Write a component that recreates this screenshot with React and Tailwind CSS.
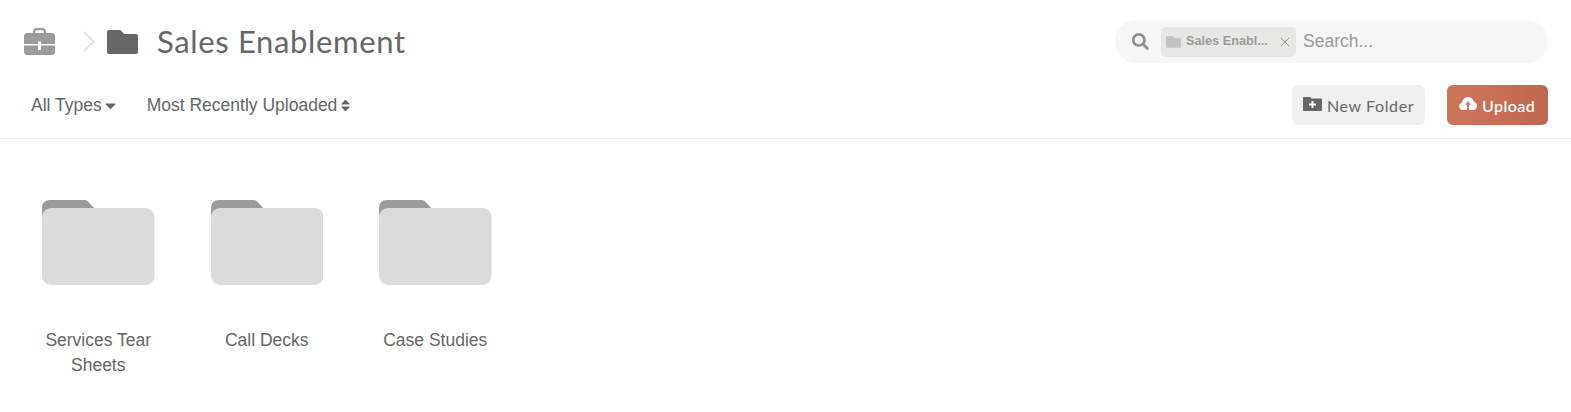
import { FaSearch, FaCaretDown, FaSort } from 'react-icons/fa';
import { FiX } from 'react-icons/fi';

const folders = ['Services Tear Sheets', 'Call Decks', 'Case Studies'];

const Briefcase = () => (
  <svg width="31" height="27" viewBox="0 0 31 27" className="shrink-0">
    <path d="M9 6V3.500C9 1.500 10.500 0 12.500 0h6C20.500 0 22 1.500 22 3.500V6h-2.200V3.800c0-1-.6-1.600-1.600-1.600h-5.400c-1 0-1.600.6-1.600 1.600V6z" fill="#9b9b9b" />
    <path d="M3 5h25c1.700 0 3 1.300 3 3v8H17v-2.500h-3V16H0V8c0-1.700 1.300-3 3-3z" fill="#9b9b9b" />
    <path d="M0 17.500h14V22h3v-4.500h14V24c0 1.700-1.300 3-3 3H3c-1.700 0-3-1.300-3-3z" fill="#9b9b9b" />
  </svg>
);

const Chevron = () => (
  <svg width="12" height="21" viewBox="0 0 12 21" className="shrink-0">
    <path d="M1 1l9.500 9.500L1 20" fill="none" stroke="#dcdfdc" strokeWidth="1.600" />
  </svg>
);

const FlatFolder = ({ className, fill }) => (
  <svg viewBox="0 0 31 24" className={className}>
    <path d="M2 0h10.500c.8 0 1.200.3 1.700.8L17 4h12c1.200 0 2 .8 2 2v16c0 1.200-.8 2-2 2H2c-1.200 0-2-.8-2-2V2C0 .8.800 0 2 0z" fill={fill} />
  </svg>
);

const NewFolderIcon = () => (
  <svg width="19" height="14" viewBox="0 0 19 14" className="shrink-0">
    <path d="M1 0h6l1.500 1.500H18c.6 0 1 .4 1 1V13c0 .6-.4 1-1 1H1c-.6 0-1-.4-1-1V1c0-.6.400-1 1-1z" fill="#666" />
    <path d="M8.500 4h2v2.500H13v2h-2.500V11h-2V8.500H6v-2h2.500z" fill="#fff" />
  </svg>
);

const UploadIcon = () => (
  <svg width="18" height="13" viewBox="0 0 18 13" className="shrink-0">
    <path d="M4 13C1.800 13 0 11.400 0 9.300 0 7.500 1.200 6.100 2.900 5.700 3.400 2.500 5.900 0 9 0c2.800 0 5.100 1.900 5.800 4.600C16.700 5.200 18 6.900 18 8.900 18 11.200 16.200 13 14 13z" fill="#fff" />
    <path d="M9 4.500l3 3.300h-2V13H8V7.800H6z" fill="#cb725a" />
  </svg>
);

const FolderTile = ({ name }) => (
  <div className="w-[168.500px] flex flex-col items-center">
    <svg width="112.500" height="85" viewBox="0 0 112.500 85">
      <path d="M0 20V8C0 3 3 0 8 0h34c2 0 3 .5 4 1.500L54 10v10z" fill="#9b9b9b" />
      <rect x="0" y="8" width="112.500" height="77" rx="9" fill="#dbdbdb" />
    </svg>
    <div className="mt-[43px] w-[130px] text-center text-[17.500px] leading-[25px] text-[#666]">{name}</div>
  </div>
);

const App = () => {
  return (
    <div className="w-[1571px] h-[412px] bg-white overflow-hidden font-['Liberation_Sans',Arial,sans-serif]">
      <div className="border-b border-[#eeeeee] h-[139px] pl-6 pr-[23px] pt-5">
        {/* Breadcrumb and search */}
        <div className="flex items-center justify-between h-[43px]">
          <div className="flex items-center">
            <Briefcase />
            <div className="ml-[28px]"><Chevron /></div>
            <FlatFolder className="ml-[12px] w-[31px] h-[24px]" fill="#666" />
            <h1 className="ml-[19px] text-[31px] leading-[43px] text-[#666] font-['Lato',sans-serif] tracking-[0.65px]">Sales Enablement</h1>
          </div>
          <div className="w-[433px] h-[43px] rounded-full bg-[#f6f6f6] flex items-center">
            <FaSearch className="ml-[17px] w-[17px] h-[17px] text-[#8f8f8f]" />
            <div className="ml-[12px] w-[135px] h-[30px] rounded-[5px] bg-[#e7e7e6] flex items-center text-[#9b9b9b]">
              <FlatFolder className="ml-[5px] w-[15px] h-[12px] shrink-0" fill="#c3c3c3" />
              <span className="ml-[5px] text-[12.700px] font-bold whitespace-nowrap">Sales Enabl...</span>
              <FiX className="ml-[9px] w-[16px] h-[16px] shrink-0 text-[#8f8f8f]" strokeWidth={1.500} />
            </div>
            <span className="ml-[7px] text-[17.500px] text-[#999]">Search...</span>
          </div>
        </div>
        {/* Filters and actions */}
        <div className="mt-[22px] flex items-center justify-between h-10">
          <div className="flex items-center pl-[7px] text-[17.500px] text-[#666]">
            <span>All Types</span>
            <FaCaretDown className="ml-[3px] w-[11px] h-[17px]" />
            <span className="ml-[31px]">Most Recently Uploaded</span>
            <FaSort className="ml-[4px] w-[9px] h-[15px]" />
          </div>
          <div className="flex items-center gap-[22px] font-['Lato',sans-serif] text-[16px]">
            <button className="w-[133px] h-10 rounded-md bg-[#f0f0f0] text-[#666] flex items-center pl-[11px]">
              <div className="-mt-[3px]"><NewFolderIcon /></div>
              <span className="ml-[5px] mt-[2px] tracking-[0.6px]">New Folder</span>
            </button>
            <button className="w-[101px] h-10 rounded-md bg-gradient-to-r from-[#ce765c] to-[#c0664e] text-white font-semibold flex items-center pl-[12px]">
              <div className="-mt-[3px]"><UploadIcon /></div>
              <span className="ml-[5px] mt-[2px] tracking-[0.4px]">Upload</span>
            </button>
          </div>
        </div>
      </div>
      {/* Folder grid */}
      <div className="flex pl-[14px] pt-[61px]">
        {folders.map((name) => (
          <FolderTile key={name} name={name} />
        ))}
      </div>
    </div>
  );
};

export default App;
